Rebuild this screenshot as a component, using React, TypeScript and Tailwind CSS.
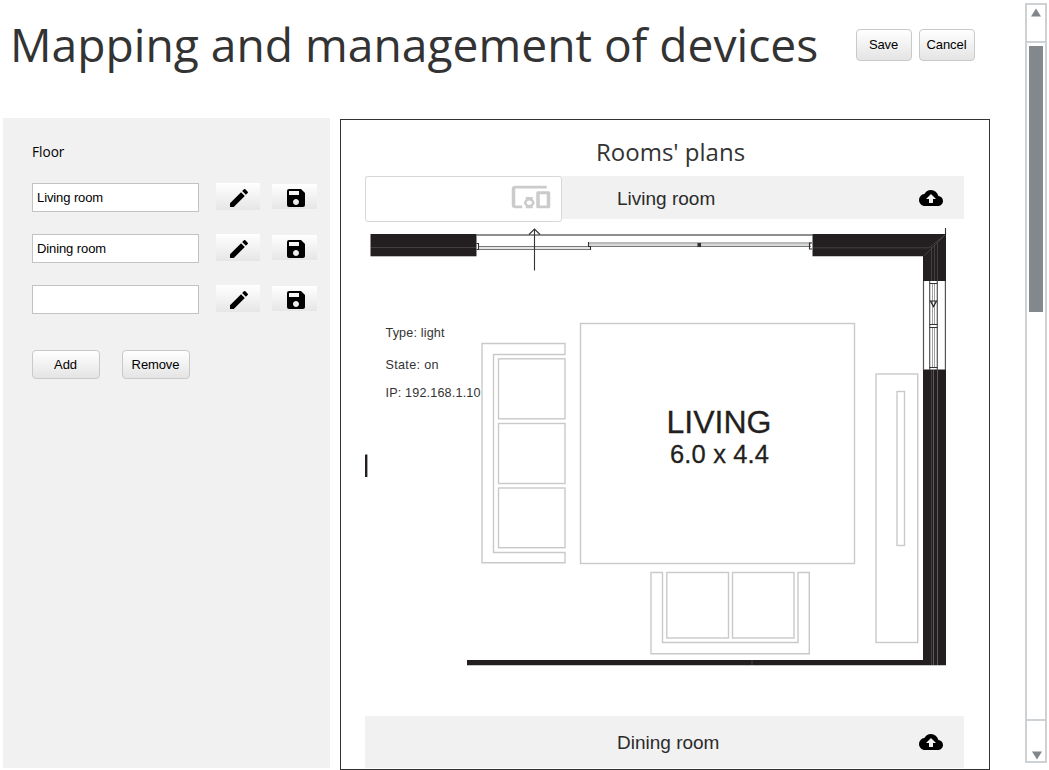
import type { ReactNode } from "react";
import { MdEdit, MdSave, MdCloudUpload } from "react-icons/md";

const rooms = ["Living room", "Dining room", ""];

function Button({ children, className }: { children: ReactNode; className: string }) {
  return (
    <button
      className={
        "flex items-center justify-center rounded-[4px] border border-[#c9c9c9] bg-linear-to-b from-white to-[#e4e4e4] pr-px text-[13px] tracking-[-0.1px] text-black " +
        className
      }
    >
      {children}
    </button>
  );
}

function RoomRow({ name }: { name: string }) {
  return (
    <div className="flex h-[29px] items-start">
      <input
        defaultValue={name}
        className="h-[29px] w-[167px] border border-[#c3c3c3] bg-white px-1 text-[13px] tracking-[-0.1px] text-black outline-none"
      />
      <button className="ml-[17px] flex h-[27px] w-[44px] justify-center bg-linear-to-b from-white to-[#e6e6e6] pt-[3px] pl-[1px]">
        <MdEdit size={24} className="shrink-0 text-black" />
      </button>
      <button className="mt-px ml-3 flex h-[25px] w-[45px] justify-center bg-linear-to-b from-white to-[#e6e6e6] pt-[2px] pl-[3px]">
        <MdSave size={24} className="shrink-0 text-black" />
      </button>
    </div>
  );
}

function RoomHeader({ name, className }: { name: string; className: string }) {
  return (
    <div className={"flex w-[599px] shrink-0 items-center bg-[#f1f1f1] " + className}>
      <span className="w-[554px] pt-[2px] pl-[252px] text-[19px] leading-6 whitespace-nowrap text-[#2b2b2b]">
        {name}
      </span>
      <MdCloudUpload size={24} className="shrink-0 text-black" />
    </div>
  );
}

function DevicesIcon() {
  return (
    <svg width="42" height="34" viewBox="0 0 24 24" preserveAspectRatio="none" fill="#cbcbcb">
      <path d="M3 6h18V4H3c-1.1 0-2 .9-2 2v12c0 1.1.9 2 2 2h4v-2H3V6zm10 6H9v1.78c-.61.55-1 1.33-1 2.22s.39 1.67 1 2.22V20h4v-1.78c.61-.55 1-1.34 1-2.22s-.39-1.67-1-2.22V12zm-2 5.5c-.83 0-1.5-.67-1.5-1.5s.67-1.5 1.5-1.5 1.5.67 1.5 1.5-.67 1.5-1.5 1.5zM22 8h-6c-.5 0-1 .5-1 1v10c0 .5.5 1 1 1h6c.5 0 1-.5 1-1V9c0-.5-.5-1-1-1zm-1 10h-4v-8h4v8z" />
    </svg>
  );
}

function FloorPlan() {
  return (
    <svg
      className="block shrink-0"
      width="599"
      height="497"
      viewBox="365 219 599 497"
      fill="none"
      fontFamily="Liberation Sans, Arial, sans-serif"
    >
      {/* walls */}
      <g fill="#231f20">
        <rect x="370.5" y="234" width="106" height="22.3" />
        <path d="M812.5 234H946V281H923V256.3H812.5z" />
        <path d="M923 369.5H946V665.3H467V660H923z" />
        <rect x="365" y="454.5" width="2.4" height="22.5" />
      </g>
      <g stroke="#4b4748" strokeWidth="0.8">
        <path d="M371 247.5H476M813 247.8H929L945 235M924 256L945 235" />
        <path d="M931.5 247V281M934.5 245V281M937.5 243V281M931.5 370V665M752 660V665" />
        <path d="M933.5 370V665M937.5 370V665" stroke="#6b6768" />
      </g>
      {/* top window */}
      <g stroke="#777" strokeWidth="1">
        <path d="M476 235H813" stroke="#6a6a6a" strokeWidth="1.5" />
        <path d="M478 246.5H589M478 249.5H591M588 243H811M588 246.3H811" strokeWidth="1.2" />
        <path d="M478 248H590M589 244.7H811" stroke="#ccc" />
      </g>
      <g stroke="#333" strokeWidth="1.1">
        <path d="M476.5 243.5H478.5V249.5H476.5M588.5 242V246.5H590.5V250M812 243H809.5V249H812" />
        <path d="M945.5 228V234M534.5 229V270.5M529 234.5L534.5 229L540 234.5" />
        <rect x="698" y="243.5" width="2.5" height="3" fill="#333" />
      </g>
      {/* right window */}
      <g stroke="#555" strokeWidth="1.2">
        <path d="M923.5 281V370M945.4 281V370" />
        <path d="M929.7 281V370M937.3 281V370" />
        <path d="M932.5 283V324M934.5 283V324M932.5 327V368M934.5 327V368" stroke="#888" strokeWidth="0.8" />
        <path d="M929.5 283.5H937.5M929.5 324.5H937.5M929.5 327.5H937.5M929.5 367.5H937.5" stroke="#333" />
        <path d="M930.5 301H936.5L933.5 306.5z" stroke="#222" />
      </g>
      {/* furniture */}
      <g stroke="#c9c9c9" strokeWidth="1.4">
        <rect x="580.5" y="323.5" width="274" height="240" />
        <path d="M565 354.5V343.5H482V562.8H565V552.5H493.5V354.5z" />
        <rect x="498.5" y="358.8" width="66.5" height="60" />
        <rect x="498.5" y="423.5" width="66.5" height="60" />
        <rect x="498.5" y="488" width="66.5" height="59.7" />
        <path d="M651 572.5H662.5V642.5H798V572.5H809.3V653.8H651z" />
        <rect x="666.8" y="572.5" width="61.7" height="65.5" />
        <rect x="732.5" y="572.5" width="61.5" height="65.5" />
        <rect x="876" y="374" width="41.7" height="268.5" />
        <rect x="897" y="391.5" width="7.5" height="154" />
      </g>
      <g fill="#231f20" stroke="#231f20" strokeWidth="0.3" textAnchor="middle">
        <text x="719" y="433.3" fontSize="31.5" textLength="105" lengthAdjust="spacingAndGlyphs">LIVING</text>
        <text x="719.5" y="462.5" fontSize="25.5" textLength="99" lengthAdjust="spacing">6.0 x 4.4</text>
      </g>
      <g fill="#333" fontSize="12.6">
        <text x="385.5" y="337" textLength="59">Type: light</text>
        <text x="385.5" y="369" textLength="53">State: on</text>
        <text x="385.5" y="397" textLength="95">IP: 192.168.1.10</text>
      </g>
    </svg>
  );
}

function ScrollBar() {
  return (
    <div className="mt-[3px] ml-auto flex h-[760px] w-[22px] flex-col border-2 border-[#cdd1d4]">
      <div className="flex h-[38px] justify-center border-b-2 border-[#cdd1d4] pt-[3px]">
        <svg width="10" height="9" viewBox="0 0 10 9" fill="#80868a">
          <path d="M5 0.5L10 8.5H0z" />
        </svg>
      </div>
      <div className="mt-[3px] ml-[2px] h-[266px] w-[14px] bg-[#82888c]" />
      <div className="mt-auto flex h-[42px] justify-center border-t-2 border-[#cdd1d4] pt-[30px] pl-px">
        <svg width="10" height="9" viewBox="0 0 10 9" fill="#80868a">
          <path d="M0 0.5H10L5 8.5z" />
        </svg>
      </div>
    </div>
  );
}

export default function App() {
  return (
    <div className="flex h-[770px] w-[1049px] overflow-hidden bg-white pr-[2px] font-['Liberation_Sans',Arial,sans-serif]">
      <div className="flex w-[990px] flex-col pl-[3px]">
        <header className="flex h-[118px] shrink-0 items-start">
          <h1 className="w-[853px] pt-[12px] pl-[7px] font-['Open_Sans',sans-serif] text-[46.2px] leading-[65px] whitespace-nowrap text-[#333]">
            Mapping and management of devices
          </h1>
          <Button className="mt-[29px] h-8 w-[56px] shrink-0">Save</Button>
          <Button className="mt-[29px] ml-[7px] h-8 w-[56px] shrink-0">Cancel</Button>
        </header>
        <div className="flex h-[652px] shrink-0">
          <aside className="h-[650px] w-[327px] shrink-0 bg-[#f1f1f1] pt-[25px] pl-[29px]">
            <h2 className="h-10 font-['Open_Sans',sans-serif] text-[13.6px] leading-[18px] text-black">Floor</h2>
            <div className="flex flex-col gap-[22px]">
              {rooms.map((name, i) => (
                <RoomRow key={i} name={name} />
              ))}
            </div>
            <div className="mt-9 flex gap-[22px]">
              <Button className="h-[29px] w-[68px]">Add</Button>
              <Button className="h-[29px] w-[68px]">Remove</Button>
            </div>
          </aside>
          <main className="relative mt-px ml-[10px] flex h-[651px] w-[650px] shrink-0 flex-col border border-[#333] pl-6">
            <h2 className="h-[56px] shrink-0 pt-[15px] pl-[231px] font-['Open_Sans',sans-serif] text-[24px] leading-[33px] text-[#333]">
              Rooms' plans
            </h2>
            <RoomHeader name="Living room" className="h-[43px]" />
            <FloorPlan />
            <RoomHeader name="Dining room" className="h-[52px]" />
            <div className="absolute top-[56px] left-6 flex h-[46px] w-[197px] justify-end rounded-[3px] border border-[#d8d8d8] bg-white pt-[3px] pr-[9px]">
              <DevicesIcon />
            </div>
          </main>
        </div>
      </div>
      <ScrollBar />
    </div>
  );
}
